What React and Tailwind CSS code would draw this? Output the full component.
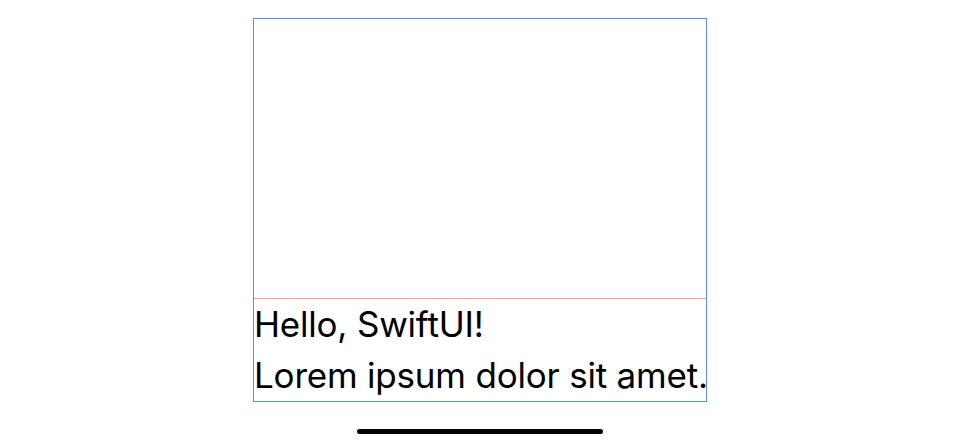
export default function App() {
  return (
    <div className="relative w-[960px] h-[444px] bg-white overflow-hidden" style={{ fontFamily: 'Inter, "Noto Sans", sans-serif' }}>
      <div className="flex justify-center pt-[18px]">
        <div className="w-[454px] h-[384px] border border-[#5b8cff] flex flex-col">
          <div className="h-[280px] border-b border-[#f59aa3]" />
          <div className="text-[35px] leading-[51px] text-black tracking-[-0.2px] whitespace-nowrap">
            <div>Hello, SwiftUI!</div>
            <div>Lorem ipsum dolor sit amet.</div>
          </div>
        </div>
      </div>
      <div className="absolute left-[357px] top-[429px] w-[246px] h-[5px] rounded-full bg-black" />
    </div>
  );
}
